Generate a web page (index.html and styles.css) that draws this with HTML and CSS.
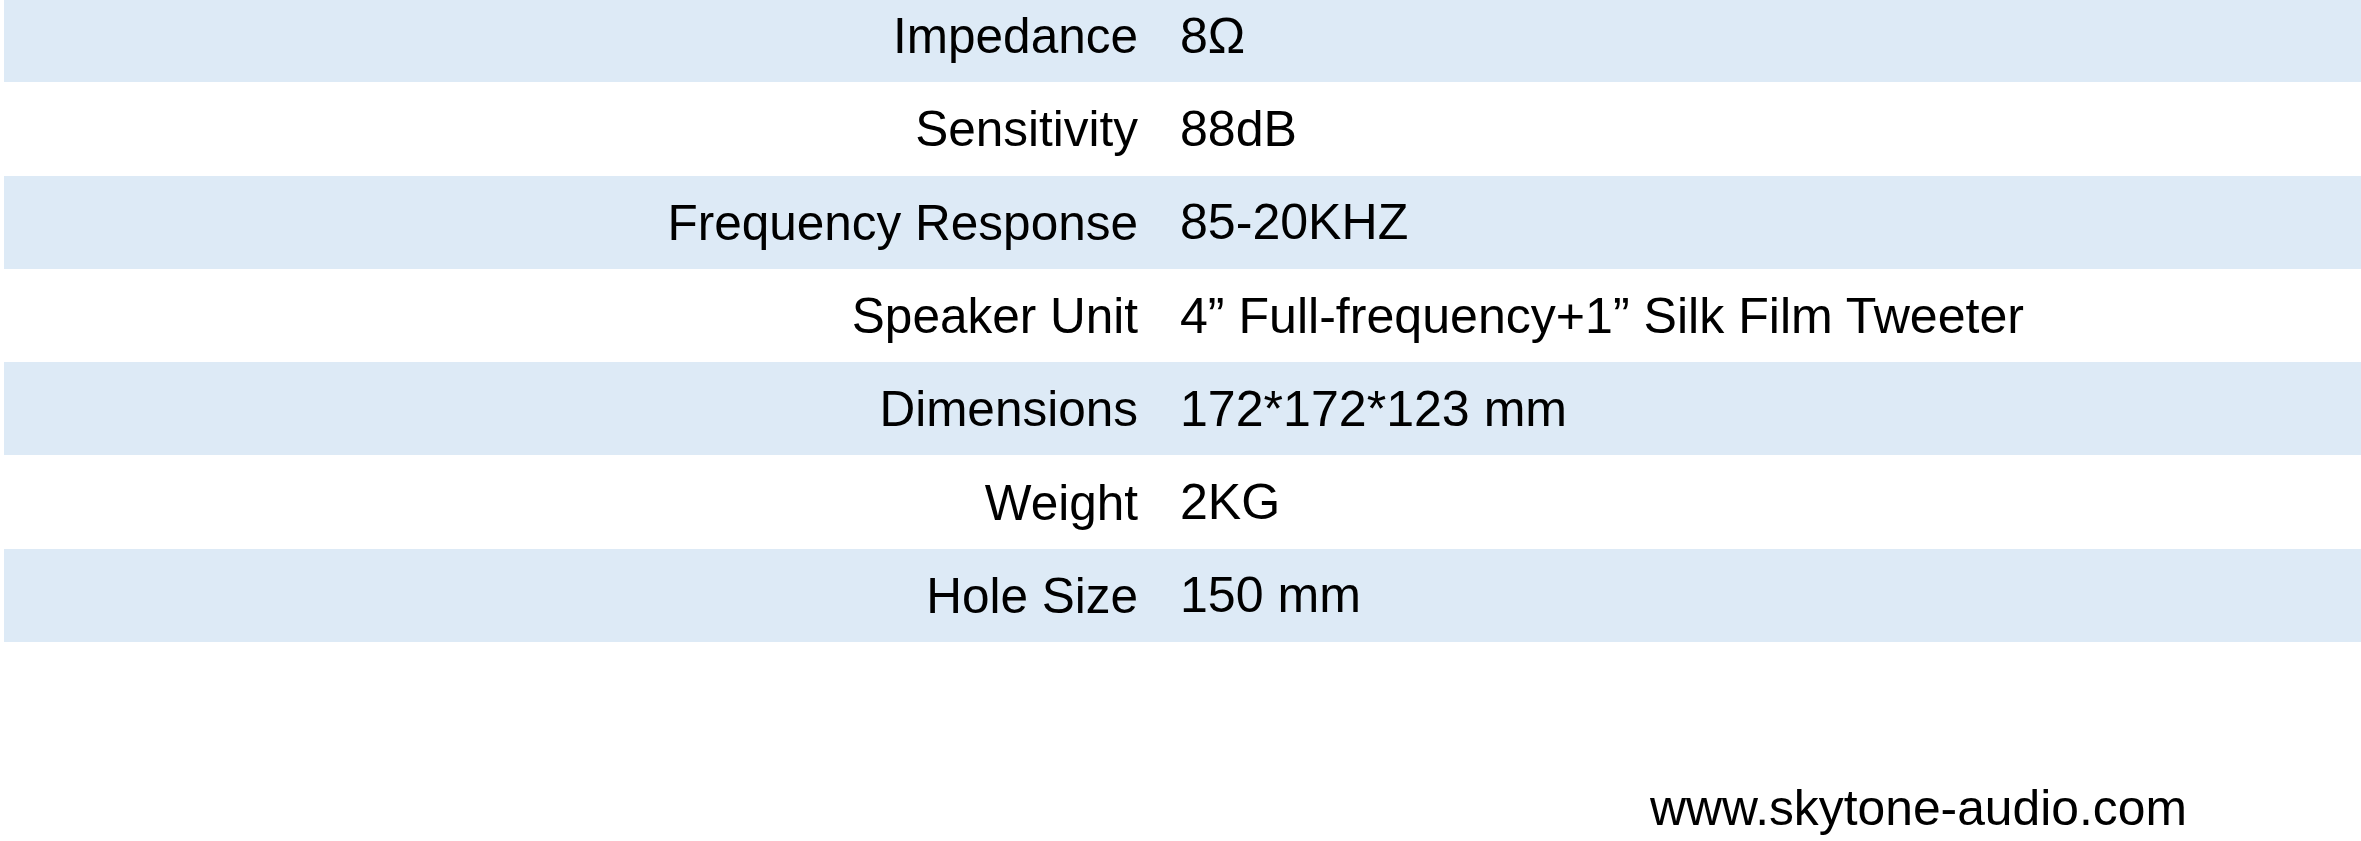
FILE: index.html
```html
<!DOCTYPE html>
<html lang="en">
<head>
<meta charset="utf-8">
<title>Specifications</title>
<link rel="stylesheet" href="styles.css">
</head>
<body>
<div class="specs">
  <div class="row shaded"><div class="label">Impedance</div><div class="value">8Ω</div></div>
  <div class="row"><div class="label">Sensitivity</div><div class="value">88dB</div></div>
  <div class="row shaded"><div class="label">Frequency Response</div><div class="value">85-20KHZ</div></div>
  <div class="row"><div class="label">Speaker Unit</div><div class="value">4” Full-frequency+1” Silk Film Tweeter</div></div>
  <div class="row shaded"><div class="label">Dimensions</div><div class="value">172*172*123 mm</div></div>
  <div class="row"><div class="label">Weight</div><div class="value">2KG</div></div>
  <div class="row shaded"><div class="label">Hole Size</div><div class="value">150 mm</div></div>
</div>
<div class="footer">www.skytone-audio.com</div>
</body>
</html>
```
FILE: styles.css
```css
html, body {
  margin: 0;
  padding: 0;
  background: #ffffff;
}
body {
  font-family: "Liberation Sans", Arial, sans-serif;
  font-size: 49.8px;
  color: #000000;
  overflow: hidden;
}
.specs {
  margin-top: -11px;
  margin-left: 4px;
  display: flex;
  flex-direction: column;
}
.row {
  height: 93.3px;
  display: grid;
  grid-template-columns: 1134px 1fr;
  column-gap: 42px;
  align-items: center;
}
.row.shaded {
  background: #ddeaf6;
}
.label {
  font-size: 49.5px;
  text-align: right;
  white-space: nowrap;
}
.value {
  font-size: 50.1px;
  white-space: nowrap;
}
.footer {
  margin-top: 137px;
  padding-left: 1650px;
  white-space: nowrap;
}
```
